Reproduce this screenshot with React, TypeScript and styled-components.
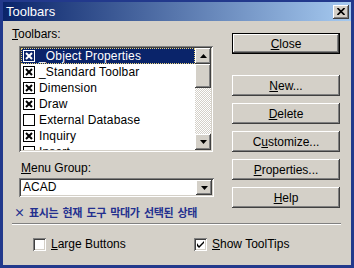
import React from "react";
import styled, { createGlobalStyle, css } from "styled-components";

const GlobalStyle = createGlobalStyle`
  html, body {
    margin: 0;
    padding: 0;
    background: #d4d0c8;
  }
`;

const raised = css`
  background: #d4d0c8;
  box-shadow: inset -1px -1px #404040, inset 1px 1px #ffffff,
    inset -2px -2px #808080, inset 2px 2px #d4d0c8;
`;

const sunken = css`
  box-shadow: inset 1px 1px #808080, inset -1px -1px #ffffff,
    inset 2px 2px #404040, inset -2px -2px #d4d0c8;
`;

const toolbars = [
  { name: "_Object Properties", on: true },
  { name: "_Standard Toolbar", on: true },
  { name: "Dimension", on: true },
  { name: "Draw", on: true },
  { name: "External Database", on: false },
  { name: "Inquiry", on: true },
  { name: "Insert", on: false },
];

function XBox({ inverted }: { inverted?: boolean }) {
  const c = inverted ? "#ffffff" : "#000000";
  return (
    <svg width="12" height="12" viewBox="0 0 12 12">
      <rect x="0.5" y="0.5" width="11" height="11" fill="none" stroke={c} />
      <path d="M3 3 L9 9 M9 3 L3 9" stroke={c} strokeWidth="2" />
    </svg>
  );
}

function EmptyBox() {
  return (
    <svg width="12" height="12" viewBox="0 0 12 12">
      <rect x="0.5" y="0.5" width="11" height="11" fill="#fff" stroke="#000" />
    </svg>
  );
}

function Arrow({ up }: { up?: boolean }) {
  return (
    <svg width="7" height="4" viewBox="0 0 7 4">
      <polygon points={up ? "3.5,0 7,4 0,4" : "0,0 7,0 3.5,4"} fill="#000" />
    </svg>
  );
}

export default function App() {
  return (
    <>
      <GlobalStyle />
      <Window>
        <TitleBar>
          <span>Toolbars</span>
          <TitleClose>
            <svg width="8" height="7" viewBox="0 0 8 7">
              <path d="M0.5 0 L7.5 7 M7.5 0 L0.5 7" stroke="#000" strokeWidth="1.6" />
            </svg>
          </TitleClose>
        </TitleBar>
        <Body>
          <TopArea>
            <LeftPane>
              <Label>
                <u>T</u>oolbars:
              </Label>
              <ListBox>
                <Rows>
                  {toolbars.map((t, i) => (
                    <Row key={t.name} $selected={i === 0}>
                      {t.on ? <XBox inverted={i === 0} /> : <EmptyBox />}
                      <RowText>{t.name}</RowText>
                    </Row>
                  ))}
                </Rows>
                <ScrollBar>
                  <ScrollButton>
                    <Arrow up />
                  </ScrollButton>
                  <Thumb />
                  <Track />
                  <ScrollButton>
                    <Arrow />
                  </ScrollButton>
                </ScrollBar>
              </ListBox>
              <MenuLabel>
                <u>M</u>enu Group:
              </MenuLabel>
              <Combo>
                <ComboText>ACAD</ComboText>
                <ComboButton>
                  <Arrow />
                </ComboButton>
              </Combo>
              <Hint>× 표시는 현재 도구 막대가 선택된 상태</Hint>
            </LeftPane>
            <ButtonColumn>
              <Button $default>
                <u>C</u>lose
              </Button>
              <ButtonStack>
                <Button>
                  <u>N</u>ew...
                </Button>
                <Button>
                  <u>D</u>elete
                </Button>
                <Button>
                  C<u>u</u>stomize...
                </Button>
                <Button>
                  <u>P</u>roperties...
                </Button>
                <Button>
                  <u>H</u>elp
                </Button>
              </ButtonStack>
            </ButtonColumn>
          </TopArea>
          <Separator />
          <BottomRow>
            <CheckItem $width={161}>
              <CheckBox />
              <span>
                <u>L</u>arge Buttons
              </span>
            </CheckItem>
            <CheckItem>
              <CheckBox>
                <svg width="7" height="7" viewBox="0 0 7 7">
                  <path d="M0 2 L0 5 L2 7 L7 2 L7 0 L2 5 Z" fill="#000" />
                </svg>
              </CheckBox>
              <span>
                <u>S</u>how ToolTips
              </span>
            </CheckItem>
          </BottomRow>
        </Body>
      </Window>
    </>
  );
}

const Window = styled.div`
  width: 354px;
  height: 268px;
  box-sizing: border-box;
  border: 3px solid #22398c;
  border-top-width: 2px;
  background: #d4d0c8;
  display: flex;
  flex-direction: column;
  font-family: "Liberation Sans", Arial, sans-serif;
  font-size: 12px;
  color: #000;
`;

const TitleBar = styled.div`
  height: 19px;
  flex-shrink: 0;
  display: flex;
  align-items: center;
  justify-content: space-between;
  padding: 0 2px 0 3px;
  background: linear-gradient(to right, #0a246a, #a6caf0);
  color: #fff;
  font-size: 13px;
`;

const TitleClose = styled.div`
  ${raised}
  width: 16px;
  height: 14px;
  display: flex;
  align-items: center;
  justify-content: center;
`;

const Body = styled.div`
  flex: 1;
  display: flex;
  flex-direction: column;
  padding: 6px 0 0 9px;
`;

const TopArea = styled.div`
  display: flex;
`;

const LeftPane = styled.div`
  width: 203px;
  display: flex;
  flex-direction: column;
`;

const Label = styled.div`
  line-height: 14px;
  height: 14px;
`;

const MenuLabel = styled(Label)`
  margin: 9px 0 0 9px;
`;

const ListBox = styled.div`
  ${sunken}
  margin: 5px 0 0 7px;
  width: 194px;
  height: 106px;
  box-sizing: border-box;
  padding: 2px;
  background: #fff;
  display: flex;
`;

const Rows = styled.div`
  flex: 1;
  overflow: hidden;
`;

const Row = styled.div<{ $selected?: boolean }>`
  height: 16px;
  box-sizing: border-box;
  display: flex;
  align-items: center;
  padding-left: 1px;
  border: 1px solid transparent;
  ${(p) =>
    p.$selected &&
    css`
      background: #0a246a;
      color: #fff;
      border: 1px dotted #e8d27a;
    `}
`;

const RowText = styled.span`
  margin-left: 4px;
  white-space: nowrap;
  letter-spacing: 0.15px;
`;

const ScrollBar = styled.div`
  width: 16px;
  display: flex;
  flex-direction: column;
`;

const ScrollButton = styled.div`
  ${raised}
  height: 16px;
  flex-shrink: 0;
  display: flex;
  align-items: center;
  justify-content: center;
`;

const Thumb = styled.div`
  ${raised}
  height: 24px;
  flex-shrink: 0;
`;

const Track = styled.div`
  flex: 1;
  background: repeating-conic-gradient(#ffffff 0 25%, #d4d0c8 0 50%) 0 0 / 2px 2px;
`;

const Combo = styled.div`
  ${sunken}
  margin: 3px 0 0 7px;
  width: 195px;
  height: 19px;
  box-sizing: border-box;
  padding: 2px;
  background: #fff;
  display: flex;
  align-items: stretch;
`;

const ComboText = styled.div`
  flex: 1;
  line-height: 15px;
  padding-left: 2px;
`;

const ComboButton = styled.div`
  ${raised}
  width: 16px;
  display: flex;
  align-items: center;
  justify-content: center;
`;

const Hint = styled.div`
  margin: 9px 0 0 2px;
  font-family: "Noto Sans CJK KR", "Liberation Sans", sans-serif;
  font-weight: 700;
  font-size: 11px;
  line-height: 13px;
  color: #24308f;
  white-space: nowrap;
  letter-spacing: -0.3px;
  word-spacing: 2px;
`;

const ButtonColumn = styled.div`
  margin: 6px 0 0 17px;
  width: 108px;
  display: flex;
  flex-direction: column;
`;

const ButtonStack = styled.div`
  margin-top: 21px;
  display: flex;
  flex-direction: column;
  gap: 7px;
`;

const Button = styled.div<{ $default?: boolean }>`
  ${raised}
  height: 21px;
  box-sizing: border-box;
  display: flex;
  align-items: center;
  justify-content: center;
  ${(p) =>
    p.$default &&
    css`
      border: 1px solid #000;
    `}
`;

const Separator = styled.div`
  margin-top: 4px;
  width: 329px;
  border-top: 1px solid #808080;
  border-bottom: 1px solid #ffffff;
`;

const BottomRow = styled.div`
  margin: 12px 0 0 21px;
  display: flex;
  align-items: center;
  height: 14px;
`;

const CheckItem = styled.div<{ $width?: number }>`
  display: flex;
  align-items: center;
  gap: 5px;
  ${(p) => p.$width && `width: ${p.$width}px;`}
`;

const CheckBox = styled.div`
  ${sunken}
  width: 13px;
  height: 13px;
  box-sizing: border-box;
  background: #fff;
  display: flex;
  align-items: center;
  justify-content: center;
`;
